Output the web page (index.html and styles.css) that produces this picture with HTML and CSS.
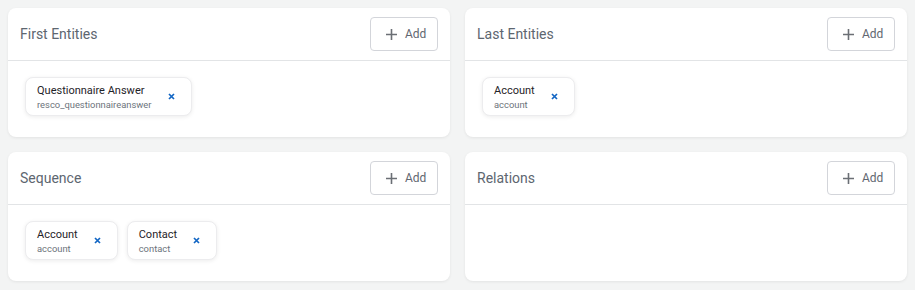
FILE: index.html
```html
<!DOCTYPE html>
<html>
    <head>
        <title>Entities</title>
        <link rel="stylesheet" href="styles.css">
    </head>
    <body>
        <div class="grid">
            <div class="card">
                <div class="card-header">
                    <span class="card-title">First Entities</span>
                    <button type="button" class="add-btn">
                        <svg width="11" height="11" viewBox="0 0 11 11"><path d="M5.5 0v11M0 5.5h11" stroke="#6b6f75" stroke-width="1.6"/></svg>
                        Add
                    </button>
                </div>
                <div class="card-body">
                    <div class="chip">
                        <div class="chip-text">
                            <span class="chip-name">Questionnaire Answer</span>
                            <span class="chip-logical">resco_questionnaireanswer</span>
                        </div>
                        <button type="button" class="chip-remove">
                            <svg width="7" height="7" viewBox="0 0 7 7"><path d="M1 1l5 5M6 1L1 6" stroke="#1266c4" stroke-width="1.7"/></svg>
                        </button>
                    </div>
                </div>
            </div>

            <div class="card">
                <div class="card-header">
                    <span class="card-title">Last Entities</span>
                    <button type="button" class="add-btn">
                        <svg width="11" height="11" viewBox="0 0 11 11"><path d="M5.5 0v11M0 5.5h11" stroke="#6b6f75" stroke-width="1.6"/></svg>
                        Add
                    </button>
                </div>
                <div class="card-body">
                    <div class="chip">
                        <div class="chip-text">
                            <span class="chip-name">Account</span>
                            <span class="chip-logical">account</span>
                        </div>
                        <button type="button" class="chip-remove">
                            <svg width="7" height="7" viewBox="0 0 7 7"><path d="M1 1l5 5M6 1L1 6" stroke="#1266c4" stroke-width="1.7"/></svg>
                        </button>
                    </div>
                </div>
            </div>

            <div class="card">
                <div class="card-header">
                    <span class="card-title">Sequence</span>
                    <button type="button" class="add-btn">
                        <svg width="11" height="11" viewBox="0 0 11 11"><path d="M5.5 0v11M0 5.5h11" stroke="#6b6f75" stroke-width="1.6"/></svg>
                        Add
                    </button>
                </div>
                <div class="card-body">
                    <div class="chip">
                        <div class="chip-text">
                            <span class="chip-name">Account</span>
                            <span class="chip-logical">account</span>
                        </div>
                        <button type="button" class="chip-remove">
                            <svg width="7" height="7" viewBox="0 0 7 7"><path d="M1 1l5 5M6 1L1 6" stroke="#1266c4" stroke-width="1.7"/></svg>
                        </button>
                    </div>
                    <div class="chip">
                        <div class="chip-text">
                            <span class="chip-name">Contact</span>
                            <span class="chip-logical">contact</span>
                        </div>
                        <button type="button" class="chip-remove">
                            <svg width="7" height="7" viewBox="0 0 7 7"><path d="M1 1l5 5M6 1L1 6" stroke="#1266c4" stroke-width="1.7"/></svg>
                        </button>
                    </div>
                </div>
            </div>

            <div class="card">
                <div class="card-header">
                    <span class="card-title">Relations</span>
                    <button type="button" class="add-btn">
                        <svg width="11" height="11" viewBox="0 0 11 11"><path d="M5.5 0v11M0 5.5h11" stroke="#6b6f75" stroke-width="1.6"/></svg>
                        Add
                    </button>
                </div>
                <div class="card-body"></div>
            </div>
        </div>
    </body>
</html>
```

FILE: styles.css
```css
body {
    font-family: Roboto, "Liberation Sans", Arial, sans-serif;
    background-color: #f3f4f4;
    margin: 0;
    padding: 8px;
}

.grid {
    display: grid;
    grid-template-columns: 1fr 1fr;
    column-gap: 15px;
    row-gap: 15px;
}

.card {
    background-color: #ffffff;
    border-radius: 8px;
    box-shadow: 0 1px 3px rgba(0, 0, 0, 0.07);
}

.card-header {
    height: 53px;
    box-sizing: border-box;
    padding: 0 12px 0 12px;
    display: flex;
    align-items: center;
    justify-content: space-between;
    border-bottom: 1px solid #e2e4e6;
}

.card-title {
    font-size: 14px;
    color: #5d6670;
}

.add-btn {
    height: 34px;
    width: 68px;
    display: flex;
    align-items: center;
    gap: 8px;
    padding: 0 0 0 15px;
    border: 1px solid #d3d5da;
    border-radius: 4px;
    background-color: #ffffff;
    font-family: inherit;
    font-size: 12px;
    color: #5f6770;
    cursor: pointer;
}

.card-body {
    min-height: 76px;
    box-sizing: border-box;
    padding: 16px 17px;
    display: flex;
    align-items: flex-start;
    gap: 9px;
}

.chip {
    height: 39px;
    box-sizing: border-box;
    display: flex;
    align-items: center;
    padding: 0 16px 0 11px;
    border: 1px solid #ececee;
    border-radius: 8px;
    box-shadow: 0 1px 4px rgba(0, 0, 0, 0.08);
    background-color: #ffffff;
}

.chip-text {
    display: flex;
    flex-direction: column;
    margin-right: 16px;
}

.chip-name {
    font-size: 11px;
    line-height: 15px;
    color: #1f2328;
}

.chip-logical {
    font-size: 9.4px;
    line-height: 13px;
    color: #6c737b;
}

.chip-remove {
    background: none;
    border: none;
    padding: 0;
    display: flex;
    cursor: pointer;
}
```
